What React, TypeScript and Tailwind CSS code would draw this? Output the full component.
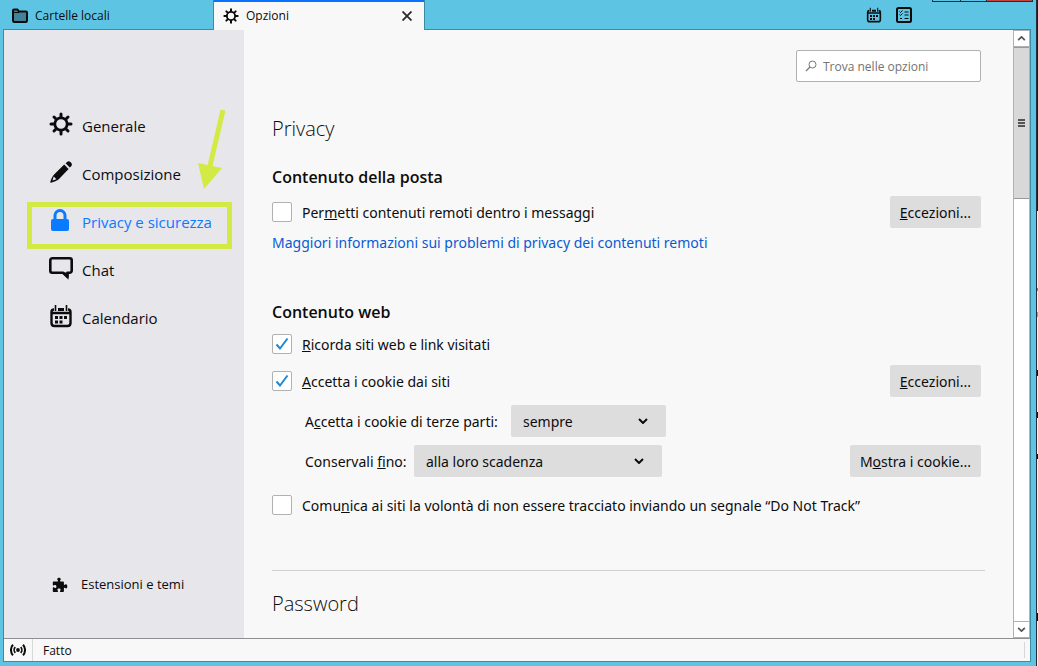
import React from 'react';
import clsx from 'clsx';

type IconProps = { className?: string };

const GearIcon = ({ className }: IconProps) => (
  <svg viewBox="0 0 24 24" className={className} fill="none" stroke="currentColor">
    <circle cx="12" cy="12" r="6.2" strokeWidth="2.8" />
    <g strokeWidth="3" strokeLinecap="round">
      <path d="M12 5V2M12 19v3M5 12H2M19 12h3" />
      <path d="M7 7L5 5M17 7l2-2M7 17l-2 2M17 17l2 2" />
    </g>
  </svg>
);

const PencilIcon = ({ className }: IconProps) => (
  <svg viewBox="0 0 24 24" className={className} fill="currentColor">
    <path d="M16.6 3.2l1.5-1.3c1-.9 2.4-.7 3.3.2l.9 1c.9 1 .8 2.3-.1 3.2l-1.400 1.300z" />
    <path d="M15.2 4.400l4.400 4.600L9.800 19.200c-1.600 1.400-4.900 2.700-7.800 3.500-.6.1-.9-.2-.7-.8.8-2.900 2.200-6 3.800-7.500z" />
    <path d="M3.400 20.600l1.400-4 2.600 2.600z" className="text-[#e7e6eb]" fill="currentColor" />
  </svg>
);

const LockIcon = ({ className }: IconProps) => (
  <svg viewBox="0 0 24 24" className={className}>
    <rect x="2" y="11" width="18" height="12" rx="2" fill="currentColor" />
    <path d="M6 12V7.500a5 5 0 0 1 10 0V12" fill="none" stroke="currentColor" strokeWidth="3" />
  </svg>
);

const ChatIcon = ({ className }: IconProps) => (
  <svg viewBox="0 0 24 24" className={className}>
    <path
      d="M3.300 2.300h17.400a2 2 0 0 1 2 2v10.400a2 2 0 0 1-2 2h-2.200v4l-4.500-4H3.300a2 2 0 0 1-2-2V4.300a2 2 0 0 1 2-2z"
      fill="none"
      stroke="currentColor"
      strokeWidth="2.600"
      strokeLinejoin="round"
    />
    <path d="M12.500 16.500h7v7.200z" fill="currentColor" />
  </svg>
);

const CalendarIcon = ({ className }: IconProps) => (
  <svg viewBox="0 0 24 24" className={className}>
    <path
      d="M5 5.500C3 5.500 2.500 7 2.500 8v11c0 2 1 3 3 3h13c2 0 3-1 3-3V8c0-1-.5-2.500-2.500-2.500M2.500 9h19"
      fill="none"
      stroke="currentColor"
      strokeWidth="2.400"
    />
    <path d="M6.500 1v6M17.500 1v6" stroke="currentColor" strokeWidth="1.600" />
    <path
      d="M9 4h6v3H9zM6 12h3v3H6zM10.500 12h3v3h-3zM15 12h3v3h-3zM6 16.500h3v3H6zM10.500 16.500h3v3h-3z"
      fill="currentColor"
    />
  </svg>
);

const TasksIcon = ({ className }: IconProps) => (
  <svg viewBox="0 0 16 16" className={className} fill="none" stroke="currentColor">
    <rect x="1" y="1" width="14" height="14" rx="1.500" strokeWidth="2" />
    <path d="M8.500 5h4M8.500 8h4M8.500 11.500h4" />
    <path d="M3.500 4.500l1 1 2-2M3.500 7.500l1 1 2-2M4 11.500h2" />
  </svg>
);

const FolderIcon = ({ className }: IconProps) => (
  <svg viewBox="0 0 16 16" className={className}>
    <path
      d="M1 12.500v-10C1 2 1.500 1.500 2 1.500h3.500L7 3.500h7c.5 0 1 .5 1 1v8c0 .8-.5 1.500-1.300 1.500H2.300C1.500 14 1 13.300 1 12.500z"
      fill="#3f8299"
      stroke="currentColor"
      strokeWidth="2"
      strokeLinejoin="round"
    />
    <path d="M2 4.500h5l1-1" fill="none" stroke="currentColor" />
  </svg>
);

const PuzzleIcon = ({ className }: IconProps) => (
  <svg viewBox="0 0 16 16" className={className} fill="currentColor">
    <path d="M14 7.300c-.7 0-.8.700-1.500.700-.4 0-.6-.3-.6-.8V5.500c0-.6-.4-1-1-1H8.800c-.5 0-.8-.2-.8-.6 0-.7.800-.8.800-1.600C8.800 1.300 8 .7 7 .7s-1.800.6-1.800 1.600c0 .8.800.9.800 1.600 0 .4-.3.600-.8.600H1.800c-.6 0-1 .4-1 1v2.300c0 .5.200.7.600.7.700 0 .9-.6 1.700-.6.900 0 1.300.6 1.300 1.500S4 11 3.100 11c-.8 0-1-.7-1.700-.7-.4 0-.6.300-.6.800V14c0 .6.400 1 1 1h3.400c.5 0 .8-.2.800-.6 0-.7-.6-.9-.6-1.600 0-.8.700-1.200 1.600-1.200s1.600.4 1.600 1.200c0 .7-.6.900-.6 1.600 0 .4.300.6.800.6h2.100c.6 0 1-.4 1-1v-2.500c0-.5.200-.8.600-.8.700 0 .8.700 1.500.7.800 0 1.300-.7 1.300-2S14.800 7.300 14 7.300z" />
  </svg>
);

const SignalIcon = ({ className }: IconProps) => (
  <svg viewBox="0 0 16 12" className={className} fill="none" stroke="currentColor">
    <circle cx="8" cy="6" r="1.900" fill="currentColor" stroke="none" />
    <path d="M5.300 3.200a4 4 0 0 0 0 5.600M10.700 3.200a4 4 0 0 1 0 5.600" strokeWidth="1.700" />
    <path d="M3 .8C.300 3.500.300 8.500 3 11.200M13 .8c2.700 2.700 2.700 7.700 0 10.400" strokeWidth="2" />
  </svg>
);

const Chevron = ({ className }: IconProps) => (
  <svg viewBox="0 0 10 6" className={className} fill="none" stroke="currentColor">
    <path d="M1 1l4 4 4-4" strokeWidth="2" />
  </svg>
);

const navItems = [
  { label: 'Generale', icon: GearIcon },
  { label: 'Composizione', icon: PencilIcon },
  { label: 'Privacy e sicurezza', icon: LockIcon, selected: true },
  { label: 'Chat', icon: ChatIcon },
  { label: 'Calendario', icon: CalendarIcon },
];

const TabBar = () => (
  <header className="mr-[5px] flex h-[30px] text-xs">
    <button
      type="button"
      className="flex w-[211px] items-center gap-[7px] border-r border-b border-[#3d8ba0] pt-[2px] pl-[9px]"
    >
      <FolderIcon className="size-4" />
      Cartelle locali
    </button>
    <div className="flex w-[210px] items-center border-t-2 border-[#0a70ff] bg-[#f8f8f8] pr-3 pl-[9px]">
      <button type="button" className="flex flex-1 items-center gap-[7px]">
        <GearIcon className="size-4" />
        Opzioni
      </button>
      <button type="button" aria-label="Chiudi scheda">
        <svg viewBox="0 0 10 10" className="size-[10px]" fill="none" stroke="#2a2a2b">
          <path d="M0.500 0.500l9 9M9.500 0.500l-9 9" strokeWidth="1.800" />
        </svg>
      </button>
    </div>
    <div className="flex flex-1 items-start justify-end border-b border-l border-[#3d8ba0]">
      <div className="flex gap-[14px] pt-[7px] pr-5">
        <button type="button" aria-label="Calendario">
          <CalendarIcon className="size-4" />
        </button>
        <button type="button" aria-label="Attività">
          <TasksIcon className="size-4" />
        </button>
      </div>
      {/* lower edge of the window's caption buttons */}
      <div className="-mr-[2px] flex h-[2px] w-[101px] border-x border-b border-[#17323c]">
        <span className="w-7 border-r border-[#17323c]" />
        <span className="w-[26px] border-r border-[#17323c]" />
        <span className="flex-1 bg-[#c0453f]" />
      </div>
    </div>
  </header>
);

const Sidebar = () => (
  <aside className="relative flex w-60 shrink-0 flex-col justify-between bg-[#e7e6eb] pt-[72px] pb-[29px]">
    <nav>
      {navItems.map(({ label, icon: Icon, selected }) => (
        <a
          key={label}
          href="#"
          className={clsx(
            'flex h-12 items-center gap-[9px] pl-[45px] text-[15px]',
            selected && 'text-[#0a7aff]'
          )}
        >
          <Icon className="mb-1 size-6" />
          {label}
        </a>
      ))}
    </nav>
    <a href="#" className="flex h-12 items-center gap-[13px] pl-12 text-[13px]">
      <PuzzleIcon className="size-4" />
      Estensioni e temi
    </a>
    {/* highlight frame and arrow over the current entry */}
    <div className="pointer-events-none absolute top-[172px] left-[23px] h-[47px] w-[205px] border-[5px] border-[#d3ea45]" />
    <svg
      viewBox="0 0 28 82"
      className="pointer-events-none absolute top-[78px] left-[193px] h-[82px] w-7"
    >
      <path d="M26 2L13 58" stroke="#d3ea45" strokeWidth="5" />
      <path d="M1 55l24 5L7 81z" fill="#d3ea45" />
    </svg>
  </aside>
);

const Checkbox = ({
  id,
  checked,
  children,
}: {
  id: string;
  checked?: boolean;
  children: React.ReactNode;
}) => (
  <div className="flex items-center gap-[10px]">
    <span className="relative flex">
      <input
        id={id}
        type="checkbox"
        defaultChecked={checked}
        className="peer size-5 appearance-none rounded-xs border border-[#b1b1b1] bg-white"
      />
      <svg
        viewBox="0 0 20 20"
        className="pointer-events-none absolute inset-0 hidden size-5 peer-checked:block"
        fill="none"
        stroke="#2088d0"
      >
        <path d="M4.500 10.500l3.500 4L15.500 4.500" strokeWidth="2" />
      </svg>
    </span>
    <label htmlFor={id} className="pt-px">
      {children}
    </label>
  </div>
);

const Button = ({ children }: { children: React.ReactNode }) => (
  <button type="button" className="h-8 rounded-xs bg-[#dddddd] px-[10px] pt-px">
    {children}
  </button>
);

const Select = ({
  id,
  value,
  className,
}: {
  id: string;
  value: string;
  className?: string;
}) => (
  <div className={clsx('relative', className)}>
    <select
      id={id}
      defaultValue={value}
      className="h-8 w-full appearance-none rounded-xs bg-[#dddddd] pt-px pl-3"
    >
      <option>{value}</option>
    </select>
    <Chevron className="pointer-events-none absolute top-[13px] right-[18px] h-[6px] w-[10px]" />
  </div>
);

const Heading = ({ children }: { children: React.ReactNode }) => (
  <h2 className="font-['Open_Sans',sans-serif] text-base leading-6 font-semibold">{children}</h2>
);

const Title = ({ children }: { children: React.ReactNode }) => (
  <h1 className="font-['Open_Sans',sans-serif] text-xl leading-8 font-light">{children}</h1>
);

const Preferences = () => (
  <main className="flex-1 px-7 pt-5 font-['Noto_Sans',sans-serif] text-sm">
    <div className="mb-[31px] flex justify-end pr-1">
      <div className="flex h-8 w-[185px] items-center gap-[6px] rounded-xs border border-[#b1b1b1] bg-white px-2">
        <svg viewBox="0 0 12 12" className="size-3 shrink-0" fill="none" stroke="#777">
          <circle cx="7.500" cy="4.500" r="3.500" />
          <path d="M5 7L1 11" strokeWidth="1.300" />
        </svg>
        <input
          type="text"
          aria-label="Trova nelle opzioni"
          placeholder="Trova nelle opzioni"
          className="w-full min-w-0 pt-px font-['Open_Sans',sans-serif] text-xs outline-none placeholder:text-[#737373]"
        />
      </div>
    </div>

    <Title>Privacy</Title>

    <section className="mt-5">
      <Heading>Contenuto della posta</Heading>
      <div className="mt-[7px] flex items-center justify-between pr-1">
        <Checkbox id="remote">
          Per<u>m</u>etti contenuti remoti dentro i messaggi
        </Checkbox>
        <Button>
          <u>E</u>ccezioni...
        </Button>
      </div>
      <a href="#" className="block leading-[30px] text-[#0a5ad4]">
        Maggiori informazioni sui problemi di privacy dei contenuti remoti
      </a>
    </section>

    <section className="mt-[42px]">
      <Heading>Contenuto web</Heading>
      <div className="mb-px flex h-10 items-center">
        <Checkbox id="history" checked>
          <u>R</u>icorda siti web e link visitati
        </Checkbox>
      </div>
      <div className="flex items-center justify-between pr-1">
        <Checkbox id="cookies" checked>
          <u>A</u>ccetta i cookie dai siti
        </Checkbox>
        <Button>
          <u>E</u>ccezioni...
        </Button>
      </div>
      <div className="mt-2 flex items-center pl-[33px]">
        <label htmlFor="third-party" className="w-[206px] pt-px">
          A<u>c</u>cetta i cookie di terze parti:
        </label>
        <Select id="third-party" value="sempre" className="w-[155px]" />
      </div>
      <div className="mt-2 flex items-center justify-between pr-1 pl-[33px]">
        <div className="flex items-center">
          <label htmlFor="keep-until" className="w-[109px] pt-px">
            Conservali <u>f</u>ino:
          </label>
          <Select id="keep-until" value="alla loro scadenza" className="w-[248px]" />
        </div>
        <Button>
          M<u>o</u>stra i cookie...
        </Button>
      </div>
      <div className="mt-3 flex h-8 items-center">
        <Checkbox id="dnt">
          Comu<u>n</u>ica ai siti la volontà di non essere tracciato inviando un segnale “Do Not
          Track”
        </Checkbox>
      </div>
    </section>

    <hr className="mt-[49px] mb-[17px] border-[#cfcfcf]" />
    <Title>Password</Title>
  </main>
);

const ScrollBar = () => (
  <div className="flex w-[17px] shrink-0 flex-col border-x border-[#b1b1b1] bg-white text-[#555]">
    <button
      type="button"
      aria-label="Scorri in alto"
      className="flex h-[17px] items-center justify-center border-y border-[#b1b1b1]"
    >
      <Chevron className="h-[5px] w-[9px] rotate-180" />
    </button>
    <div className="flex h-[152px] flex-col items-center justify-center gap-px border-y border-[#999] bg-[#d8d8d8]">
      <span className="h-[2px] w-[7px] bg-[#555]" />
      <span className="h-[2px] w-[7px] bg-[#555]" />
      <span className="h-[2px] w-[7px] bg-[#555]" />
    </div>
    <button
      type="button"
      aria-label="Scorri in basso"
      className="mt-auto flex h-[17px] items-center justify-center border-y border-[#b1b1b1]"
    >
      <Chevron className="h-[5px] w-[9px]" />
    </button>
  </div>
);

const StatusBar = () => (
  <footer className="flex h-[23px] items-stretch border-t border-[#8f8f8f] bg-[#f8f8f8] text-xs">
    <div className="flex w-[29px] items-center justify-center border-r border-[#d8d8d8]">
      <SignalIcon className="h-3 w-4" />
    </div>
    <span className="flex flex-1 items-center pt-px pl-[10px]">Fatto</span>
    <span className="my-[3px] mr-[5px] w-px bg-[#d8d8d8]" />
  </footer>
);

// sliver of the window behind, along the right edge
const behindMarks = [
  { top: 288, height: 3, color: '#c8742c' },
  { top: 312, height: 5, color: '#5aa9dc' },
  { top: 370, height: 6, color: '#111111' },
  { top: 412, height: 6, color: '#111111' },
  { top: 454, height: 5, color: '#111111' },
  { top: 613, height: 8, color: '#111111' },
];

const BehindWindow = () => (
  <div className="relative w-[2px] border-l border-[#2b2b33] bg-[#f0f0f0]">
    <div className="h-[211px] bg-[#1e1e1e]" />
    {behindMarks.map(({ top, height, color }) => (
      <span
        key={top}
        className="absolute left-0 w-px"
        style={{ top, height, backgroundColor: color }}
      />
    ))}
  </div>
);

export default function App() {
  return (
    <div className="flex min-h-screen bg-[#5ec4e4] font-['Open_Sans','Noto_Sans',sans-serif] text-[#0c0c0d]">
      <div className="flex flex-1 flex-col pb-1 pl-[3px]">
        <TabBar />
        <div className="mr-[5px] flex flex-1 flex-col border-x border-b border-[#3d8ba0] bg-[#f8f8f8]">
          <div className="flex flex-1">
            <Sidebar />
            <Preferences />
            <ScrollBar />
          </div>
          <StatusBar />
        </div>
      </div>
      <BehindWindow />
    </div>
  );
}
